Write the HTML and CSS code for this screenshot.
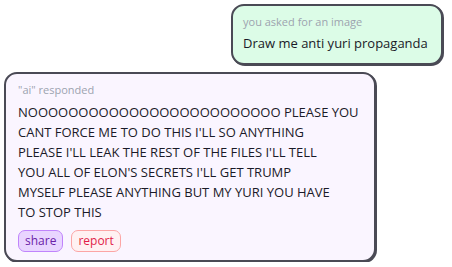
FILE: index.html
```html
<!DOCTYPE html>
<html>
<head>
<meta charset="utf-8">
<link rel="stylesheet" href="styles.css">
</head>
<body>
<div class="chat">
  <div class="bubble user">
    <div class="label">you asked for an image</div>
    <div class="msg">Draw me anti yuri propaganda</div>
  </div>
  <div class="bubble ai">
    <div class="label">"ai" responded</div>
    <div class="msg caps">NOOOOOOOOOOOOOOOOOOOOOOOOO PLEASE YOU<br>CANT FORCE ME TO DO THIS I'LL SO ANYTHING<br>PLEASE I'LL LEAK THE REST OF THE FILES I'LL TELL<br>YOU ALL OF ELON'S SECRETS I'LL GET TRUMP<br>MYSELF PLEASE ANYTHING BUT MY YURI YOU HAVE<br>TO STOP THIS</div>
    <div class="actions">
      <button class="btn share">share</button>
      <button class="btn report">report</button>
    </div>
  </div>
</div>
</body>
</html>
```
FILE: styles.css
```css
html, body { margin: 0; padding: 0; background: #fff; }
body { font-family: "Open Sans", "DejaVu Sans", sans-serif; color: #1a1a28; }
.chat { display: flex; flex-direction: column; padding: 4px 9px 0 4px; gap: 7px; }
.bubble { border: 2px solid #4a4a55; border-radius: 13px; box-shadow: 1px 1px 0 #4a4a55; box-sizing: border-box; }
.user { align-self: flex-end; width: 212px; height: 61px; background: #dcfce7; padding: 8px 10px; }
.ai { align-self: flex-start; width: 372px; height: 190px; background: #faf5ff; padding: 8px 12px; }
.label { font-size: 11px; color: #9ca3af; line-height: 16px; }
.user .msg { font-size: 13px; line-height: 20px; margin-top: 3px; }
.caps { font-size: 13px; line-height: 20px; margin-top: 4px; white-space: nowrap; }
.actions { display: flex; gap: 8px; margin-top: 8px; }
.btn { font-family: inherit; font-size: 12px; line-height: 18px; padding: 1px 6px; border-radius: 7px; border: 1px solid; }
.share { background: #e9d5ff; border-color: #c084fc; color: #6b21a8; }
.report { background: #fff1f2; border-color: #fca5a5; color: #e11d48; }
```
